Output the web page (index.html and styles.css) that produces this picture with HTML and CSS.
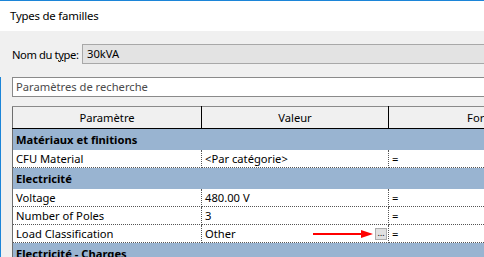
FILE: index.html
```html
<!DOCTYPE html>
<html lang="fr">
<head>
    <meta charset="UTF-8">
    <title>Types de familles</title>
    <link rel="stylesheet" href="styles.css">
</head>
<body>
    <div class="dialog">
        <div class="titlebar">Types de familles</div>

        <div class="dialog-body">
            <div class="type-row">
                <label class="type-label">Nom du t<u>y</u>pe:</label>
                <div class="type-input">30kVA</div>
            </div>

            <div class="lower">
                <div class="search">Paramètres de recherche</div>

                <table class="params">
                    <colgroup>
                        <col class="col-param">
                        <col class="col-value">
                        <col class="col-formula">
                    </colgroup>
                    <thead>
                        <tr>
                            <th>Paramètre</th>
                            <th>Valeur</th>
                            <th>Formule</th>
                        </tr>
                    </thead>
                    <tbody>
                        <tr class="group"><td colspan="3">Matériaux et finitions</td></tr>
                        <tr>
                            <td>CFU Material</td>
                            <td>&lt;Par catégorie&gt;</td>
                            <td>=</td>
                        </tr>
                        <tr class="group"><td colspan="3">Electricité</td></tr>
                        <tr>
                            <td>Voltage</td>
                            <td>480.00 V</td>
                            <td>=</td>
                        </tr>
                        <tr>
                            <td>Number of Poles</td>
                            <td>3</td>
                            <td>=</td>
                        </tr>
                        <tr>
                            <td>Load Classification</td>
                            <td class="with-button">
                                <div class="cell-flex">
                                    <span>Other</span>
                                    <span class="dots-btn">…</span>
                                </div>
                                <!-- annotation arrow -->
                                <svg class="arrow" width="62" height="8" viewBox="0 0 62 8">
                                    <line x1="0" y1="4" x2="50" y2="4" stroke="#ff0000" stroke-width="2"/>
                                    <polygon points="48,0 60,4 48,8" fill="#ff0000"/>
                                </svg>
                            </td>
                            <td>=</td>
                        </tr>
                        <tr class="group"><td colspan="3">Electricité - Charges</td></tr>
                    </tbody>
                </table>
            </div>
        </div>
    </div>
</body>
</html>
```

FILE: styles.css
```css
html {
    overflow: hidden;
}
body {
    margin: 0;
    width: 484px;
    height: 257px;
    overflow: hidden;
    font-family: 'Noto Sans', sans-serif;
    font-size: 11.2px;
    color: #000;
}
.dialog {
    width: 600px;
}
.titlebar {
    height: 30px;
    line-height: 30px;
    padding-left: 10px;
    background: white;
    border-top: 1px solid #1c85d8;
    font-size: 11.4px;
    letter-spacing: -0.2px;
}
.dialog-body {
    background: #f0f0f0;
    padding-top: 13px;
    height: 213px;
    overflow: hidden;
}
.type-row {
    display: flex;
    align-items: center;
    padding-left: 12px;
    height: 20px;
}
.type-label {
    flex: 0 0 70px;
    white-space: nowrap;
    letter-spacing: -0.4px;
}
.type-input {
    flex: 1;
    height: 18px;
    line-height: 18px;
    padding-left: 4px;
    background: #e3e3e3;
    border: 1px solid #a8a8a8;
}
.lower {
    margin-top: 13px;
    padding-left: 11px;
    border-left: 1px solid #1c85d8;
}
.search {
    height: 18px;
    line-height: 18px;
    padding-left: 3px;
    background: white;
    border: 1px solid #8a8a8a;
    color: #4a4a4a;
}
.params {
    margin-top: 9px;
    width: 578px;
    table-layout: fixed;
    border-collapse: collapse;
    background: white;
    border-left: 1px solid #6e6e6e;
    border-top: 1px solid #8a8a8a;
}
.col-param { width: 189px; }
.col-value { width: 187px; }
.params th {
    height: 21px;
    padding: 0;
    font-weight: normal;
    background: #f0f0f0;
    border-bottom: 1px solid #000;
    border-right: 1px solid #000;
}
.params td {
    height: 17px;
    padding: 0 0 0 3px;
    white-space: nowrap;
    overflow: hidden;
    border-bottom: 1px dotted #555;
    border-right: 1px dotted #555;
}
.params .group td {
    height: 21px;
    background: #99b4d1;
    font-weight: bold;
    border: none;
}
.with-button {
    position: relative;
    overflow: visible !important;
}
.cell-flex {
    display: flex;
    align-items: center;
    justify-content: space-between;
    padding-right: 1px;
}
.dots-btn {
    width: 10px;
    height: 10px;
    line-height: 8px;
    font-size: 9px;
    text-align: center;
    background: #e1e1e1;
    border: 1px solid #adadad;
}
.arrow {
    position: absolute;
    left: 111px;
    top: 5px;
}
```
